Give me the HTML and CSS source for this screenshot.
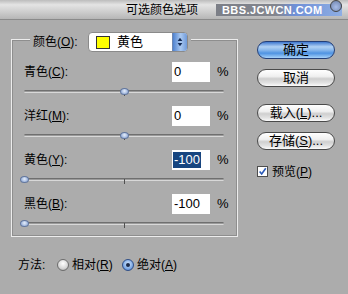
FILE: index.html
```html
<!DOCTYPE html>
<html>
<head>
<meta charset="utf-8">
<link rel="stylesheet" href="styles.css">
</head>
<body>
<div class="titlebar">
  <span class="title">可选颜色选项</span>
  <span class="wm">BBS.JCWCN.COM<span class="wm-dot"></span></span>
</div>
<div class="main">
  <fieldset class="group">
    <legend class="legend">
      <span class="legend-lbl">颜色(<u>O</u>):</span>
      <span class="select">
        <span class="swatch"></span>
        <span class="sel-text">黄色</span>
        <span class="stepper">
          <svg width="15" height="20" viewBox="0 0 15 20"><path d="M7.5 5.5 L10 9 L5 9 Z" fill="#142a55"/><path d="M7.5 14.5 L10 11 L5 11 Z" fill="#142a55"/></svg>
        </span>
      </span>
    </legend>
    <div class="block">
      <div class="row"><span class="name">青色(<u>C</u>):</span><span class="field">0</span><span class="pct">%</span></div>
      <div class="slider"><span class="track"></span><span class="tick"></span><span class="thumb" style="left:50%"></span></div>
    </div>
    <div class="block">
      <div class="row"><span class="name">洋红(<u>M</u>):</span><span class="field">0</span><span class="pct">%</span></div>
      <div class="slider"><span class="track"></span><span class="tick"></span><span class="thumb" style="left:50%"></span></div>
    </div>
    <div class="block">
      <div class="row"><span class="name">黄色(<u>Y</u>):</span><span class="field"><span class="selected">-100</span></span><span class="pct">%</span></div>
      <div class="slider"><span class="track"></span><span class="tick"></span><span class="thumb" style="left:0%"></span></div>
    </div>
    <div class="block">
      <div class="row"><span class="name">黑色(<u>B</u>):</span><span class="field">-100</span><span class="pct">%</span></div>
      <div class="slider"><span class="track"></span><span class="tick"></span><span class="thumb" style="left:0%"></span></div>
    </div>
  </fieldset>
  <div class="side">
    <span class="btn btn-primary">确定</span>
    <span class="btn btn-2">取消</span>
    <span class="btn btn-3">载入(<u>L</u>)...</span>
    <span class="btn btn-4">存储(<u>S</u>)...</span>
    <span class="check-row">
      <span class="checkbox"><svg width="11" height="11" viewBox="0 0 11 11"><path d="M2 5.5 L4.5 8.5 L9.5 1.5" fill="none" stroke="#2a5ab8" stroke-width="2"/></svg></span>
      <span class="check-lbl">预览(<u>P</u>)</span>
    </span>
  </div>
</div>
<div class="method">
  <span class="method-lbl">方法:</span>
  <span class="radio"></span>
  <span class="radio-lbl">相对(<u>R</u>)</span>
  <span class="radio radio-on"><span class="radio-dot"></span></span>
  <span class="radio-lbl">绝对(<u>A</u>)</span>
</div>
</body>
</html>
```

FILE: styles.css
```css
* { box-sizing: border-box; }
html, body { margin: 0; padding: 0; }
body {
  width: 348px;
  height: 294px;
  overflow: hidden;
  background: #acacac;
  color: #000;
  font: 12px/14px "Liberation Sans", "Noto Sans CJK SC", sans-serif;
}
u { text-decoration: underline; text-underline-offset: 1px; }

.titlebar {
  height: 20px;
  display: flex;
  align-items: center;
  background: linear-gradient(#bcbcbc 0%, #e4e4e4 25%, #d2d2d2 55%, #b6b6b6 100%);
  border-bottom: 1px solid #8a8a8a;
}
.title { margin-left: 126px; width: 72px; white-space: nowrap; }
.wm {
  position: relative;
  margin-left: 18px;
  width: 126px;
  height: 12px;
  padding-left: 6px;
  font: bold 11px/12px "Liberation Sans", sans-serif;
  letter-spacing: 0.4px;
  color: #fff;
  background: linear-gradient(90deg, #7c7f87 0%, #83868e 48%, #6f8fd6 62%, #8eaee4 100%);
}
.wm-dot {
  position: absolute;
  right: 0;
  top: -4px;
  width: 12px;
  height: 12px;
  border-radius: 50%;
  border: 1px solid #444;
  background: radial-gradient(circle at 50% 60%, #a8bde8, #6b7fa8);
}

.main { display: flex; align-items: flex-start; }

.group {
  margin: 12px 0 0 11px;
  width: 227px;
  padding: 16px 7px 4px 12px;
  border: 1px solid #ececec;
  box-shadow: inset 0 0 0 1px #8e8e8e;
  min-width: 0;
}
.legend {
  margin-left: 6px;
  padding: 0 3px;
  height: 14px;
  display: flex;
  align-items: flex-start;
  background: #acacac;
}
.legend-lbl { width: 55px; height: 20px; line-height: 20px; white-space: nowrap; }
.select {
  width: 100px;
  height: 20px;
  display: flex;
  align-items: center;
  background: #fff;
  border: 1px solid #8a8a8a;
  border-radius: 4px;
  overflow: hidden;
}
.swatch {
  width: 14px;
  height: 13px;
  margin-left: 7px;
  background: #ffff00;
  border: 1px solid #333;
}
.sel-text { margin-left: 7px; flex: 1; font-size: 13px; line-height: 18px; }
.stepper {
  width: 15px;
  height: 20px;
  display: flex;
  background: linear-gradient(90deg, #4f82cf, #a9c8f0 55%, #6f9ada);
  border-left: 1px solid #6d86b0;
}

.block { margin-bottom: 6px; }
.block:last-child { margin-bottom: 0; }
.row { height: 20px; display: flex; align-items: center; }
.name { flex: 1; white-space: nowrap; }
.field {
  width: 38px;
  height: 20px;
  background: #fff;
  padding-left: 2px;
  display: flex;
  align-items: center;
  font-size: 13px;
}
.selected {
  background: #17457f;
  color: #fff;
  line-height: 16px;
  padding: 0 1px 0 1px;
  margin-left: -1px;
}
.pct { width: 20px; padding-left: 7px; font-size: 13px; }

.slider { position: relative; height: 18px; width: 200px; }
.track {
  position: absolute;
  left: 0;
  right: 0;
  top: 8px;
  height: 3px;
  border-top: 1px solid #6f6f6f;
  border-bottom: 1px solid #d8d8d8;
  background: #9a9a9a;
  border-radius: 2px;
}
.tick {
  position: absolute;
  left: 100px;
  top: 9px;
  width: 1px;
  height: 5px;
  background: #505050;
}
.thumb {
  position: absolute;
  top: 6px;
  width: 9px;
  height: 7px;
  margin-left: -4px;
  border-radius: 50%;
  border: 1px solid #62779e;
  background: radial-gradient(circle at 50% 40%, #e6eefa, #9db4dc 70%);
}

.side {
  display: flex;
  flex-direction: column;
  margin-left: 19px;
  padding-top: 21px;
}
.btn {
  width: 78px;
  height: 18px;
  border-radius: 9px;
  border: 1px solid #4a4a4a;
  display: flex;
  align-items: center;
  justify-content: center;
  font-size: 13px;
  background: linear-gradient(#ffffff 0%, #f0f0f0 40%, #cfcfcf 55%, #e2e2e2 80%, #fbfbfb 100%);
  white-space: nowrap;
}
.btn-primary {
  border-color: #243f78;
  background: linear-gradient(#3f78cf 0%, #b2d2f4 30%, #8ab8ec 50%, #4f93e2 70%, #a6d2fa 100%);
}
.btn-2 { margin-top: 10px; }
.btn-3 { margin-top: 17px; }
.btn-4 { margin-top: 10px; }
.check-row { margin-top: 15px; display: flex; align-items: center; height: 13px; }
.checkbox {
  width: 11px;
  height: 11px;
  background: #fff;
  border: 1px solid #4d4d4d;
  display: flex;
  align-items: center;
  justify-content: center;
}
.checkbox svg { display: block; }
.check-lbl { margin-left: 4px; }

.method {
  margin-top: 20px;
  height: 16px;
  display: flex;
  align-items: center;
  padding-left: 18px;
}
.method-lbl { width: 39px; }
.radio {
  width: 12px;
  height: 12px;
  border-radius: 50%;
  border: 1px solid #6d6d6d;
  background: radial-gradient(circle at 50% 35%, #ffffff, #d6d6d6 60%, #9a9a9a);
  display: flex;
  align-items: center;
  justify-content: center;
}
.radio-lbl { margin-left: 3px; width: 50px; white-space: nowrap; }
.radio-on {
  border-color: #2f4f88;
  background: radial-gradient(circle at 50% 40%, #d8e8fb, #7eaae6 60%, #3f6cc0);
}
.radio-dot { width: 4px; height: 4px; border-radius: 50%; background: #1a2a4a; }
```
